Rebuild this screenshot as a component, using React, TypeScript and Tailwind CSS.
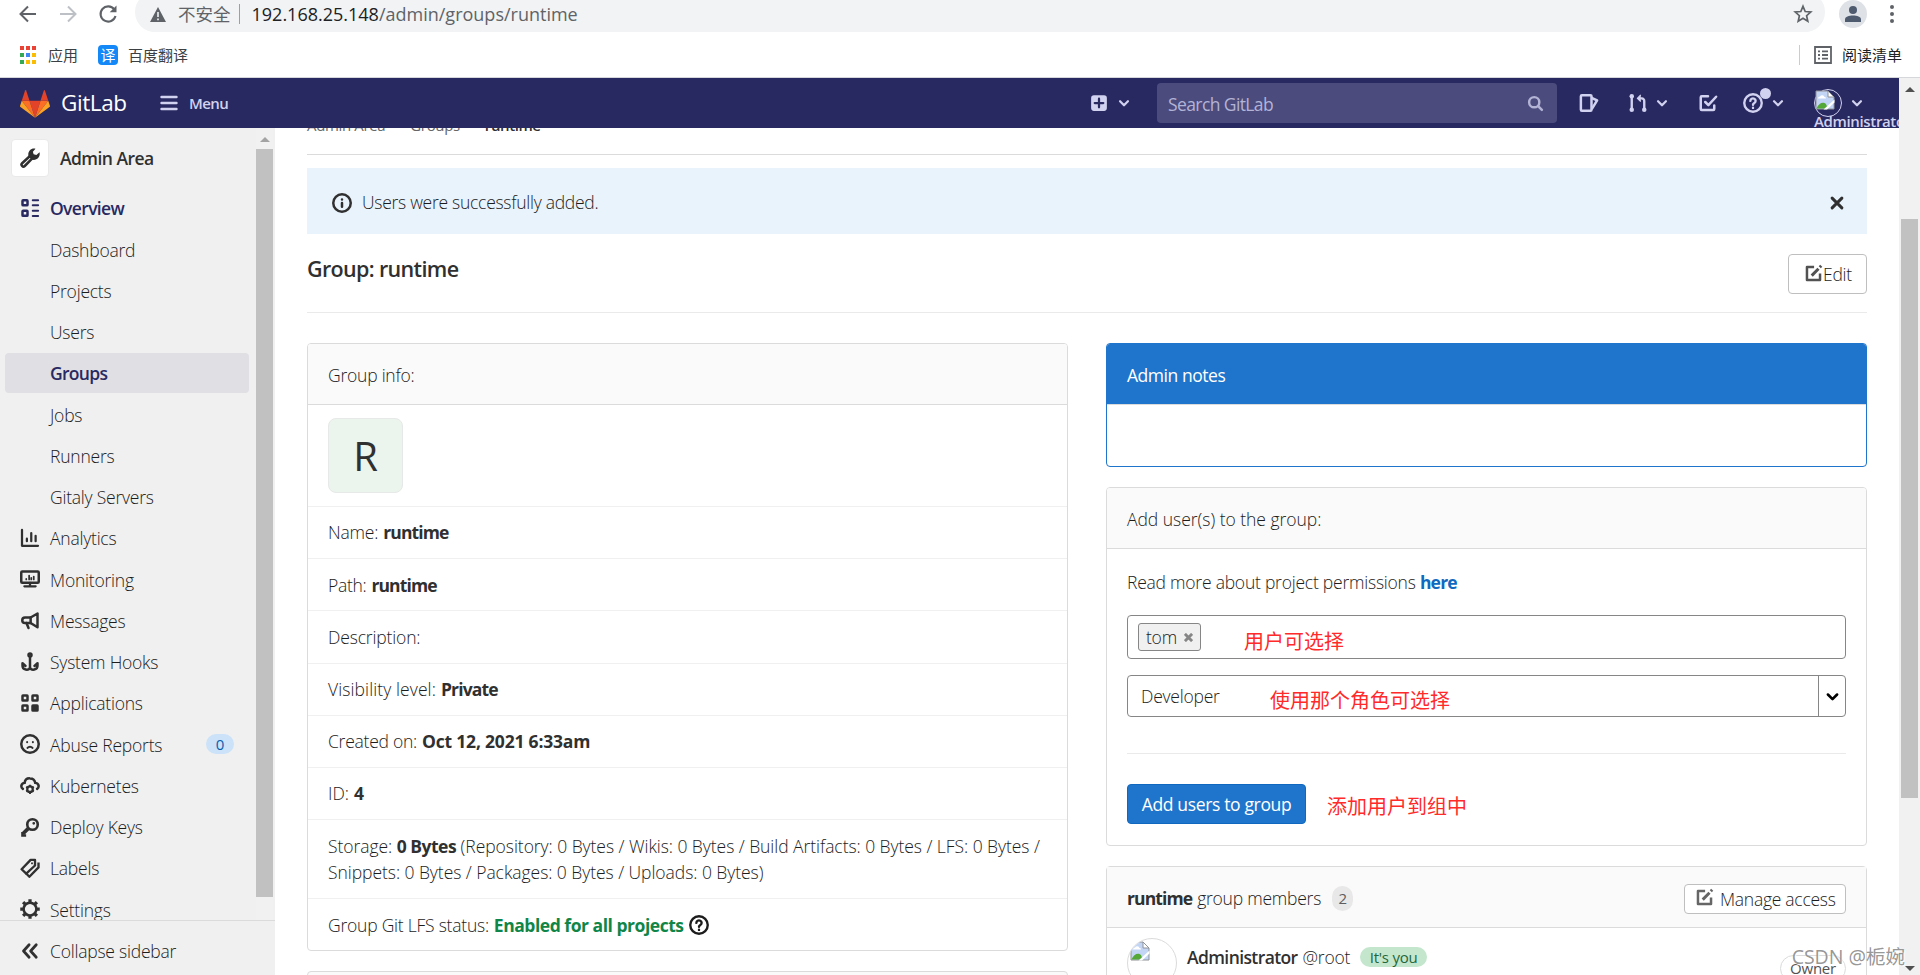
import type { ReactNode } from "react";

const navItems = [
  { label: "Analytics", icon: "chart" },
  { label: "Monitoring", icon: "monitor" },
  { label: "Messages", icon: "messages" },
  { label: "System Hooks", icon: "hook" },
  { label: "Applications", icon: "applications" },
  { label: "Abuse Reports", icon: "abuse", badge: 0 },
  { label: "Kubernetes", icon: "kubernetes" },
  { label: "Deploy Keys", icon: "key" },
  { label: "Labels", icon: "labels" },
  { label: "Settings", icon: "settings" },
];

const overviewItems = ["Dashboard", "Projects", "Users", "Groups", "Jobs", "Runners", "Gitaly Servers"];

const groupInfo = [
  { label: "Name:", value: "runtime", tracking: "tracking-[-0.2px]" },
  { label: "Path:", value: "runtime", tracking: "tracking-[-0.3px]" },
  { label: "Description:", value: "", tracking: "tracking-[-0.15px]" },
  { label: "Visibility level:", value: "Private", tracking: "tracking-[0.1px]" },
  { label: "Created on:", value: "Oct 12, 2021 6:33am", tracking: "tracking-[-0.25px]" },
  { label: "ID:", value: "4", tracking: "tracking-[0px]" },
];

const iconPaths: Record<string, ReactNode> = {
  overview: (
    <g fill="none" stroke="currentColor" strokeWidth="2">
      <rect x="2" y="1.8" width="4" height="4" rx="0.5" />
      <rect x="2" y="10.2" width="4" height="4" rx="0.5" />
      <path strokeWidth="1.6" strokeLinecap="round" d="M10.2 1.7h4.3M10.2 5.8h4.3M10.2 10.2h4.3M10.2 14.3h4.3" />
    </g>
  ),
  chart: (
    <g fill="none" stroke="currentColor" strokeLinecap="round" strokeWidth="1.8">
      <path strokeLinejoin="round" d="M1.6 1.5v12.7h12.8" />
      <path d="M5.5 8.5v2M9 4v6.5M12.5 6.2v4.3" />
    </g>
  ),
  monitor: (
    <g fill="none" stroke="currentColor" strokeLinecap="round">
      <rect x="1" y="2" width="14" height="9" rx="0.8" strokeWidth="2" />
      <path strokeWidth="1.4" d="M5 7.9v.4M7.3 5.2v3.1M9 7v1.3M11 6v2.3" />
      <path strokeWidth="1.8" d="M3.5 13.8h9M8 11v2.5" />
    </g>
  ),
  messages: (
    <g fill="none" stroke="currentColor" strokeWidth="2" strokeLinejoin="round" strokeLinecap="round">
      <path d="M14 2v11L8.5 9.6H4A2.2 2.2 0 0 1 4 5.2h4.5z" />
      <path d="M8.5 5.2v4.4M5.2 9.6l1.6 4" />
    </g>
  ),
  hook: (
    <g fill="none" stroke="currentColor" strokeWidth="2" strokeLinecap="round" strokeLinejoin="round">
      <circle cx="8" cy="2.3" r="1.2" />
      <path d="M8 4v8.5c-1 2.5-6.2 2.3-6-1.8V9l2.4 2.2M8 12.5c1 2.5 6.2 2.3 6-1.8V9l-2.4 2.2" />
    </g>
  ),
  applications: (
    <g fill="none" stroke="currentColor" strokeWidth="2">
      <rect x="2" y="2" width="4" height="4" rx="0.3" />
      <rect x="10" y="2" width="4" height="4" rx="0.3" />
      <rect x="2" y="10" width="4" height="4" rx="0.3" />
      <rect x="10" y="10" width="4" height="4" rx="0.3" fill="currentColor" />
    </g>
  ),
  abuse: (
    <g fill="none" stroke="currentColor">
      <circle cx="8" cy="8" r="7" strokeWidth="2" />
      <path strokeWidth="1.6" strokeLinecap="round" d="M5.7 6.4v.2M10.3 6.4v.2M6 11.1c1-1.3 3-1.3 4 0" />
    </g>
  ),
  kubernetes: (
    <g fill="none" stroke="currentColor">
      <path strokeWidth="2" strokeLinecap="round" d="M2.3 10.3C.3 9 .8 5.8 3.7 5.5 4 2.6 6 1.8 8 1.9c2.5 0 3.9 1.5 4.2 3.6 3 .2 3.5 3.5 1.5 4.8" />
      <circle cx="8" cy="10.5" r="2.2" strokeWidth="1.8" />
      <path strokeWidth="1.5" d="M8 7v1.2M8 12.8V14.3M4.9 8.7l1.1.6M10 11.7l1.1.6M11.1 8.7l-1.1.6M6 11.7l-1.1.6" />
    </g>
  ),
  key: (
    <g fill="none" stroke="currentColor">
      <circle cx="10" cy="6" r="4.2" strokeWidth="2.1" />
      <path strokeWidth="3" strokeLinejoin="round" d="M6.5 9.3L2.3 13.4" />
      <path strokeWidth="1.9" d="M1.9 12v2.8h3" />
      <circle cx="11" cy="5" r="0.6" strokeWidth="1" />
    </g>
  ),
  labels: (
    <g fill="none" stroke="currentColor" strokeLinejoin="round">
      <path strokeWidth="1.9" d="M8.5 1.5H12V6L5 12.5 1.3 9z" />
      <path strokeWidth="1.9" d="M14.8 3.5v4L7.5 15 4.5 12" />
      <path strokeWidth="1.5" strokeLinecap="round" d="M9.6 4.2v.1" />
    </g>
  ),
  settings: (
    <g fill="none" stroke="currentColor">
      <circle cx="8" cy="8" r="5.1" strokeWidth="2" />
      <path
        strokeWidth="2.6"
        d="M8 .2v2.3M8 13.5v2.3M.2 8h2.3M13.5 8h2.3M2.5 2.5l1.6 1.6M11.9 11.9l1.6 1.6M13.5 2.5l-1.6 1.6M4.1 11.9l-1.6 1.6"
      />
    </g>
  ),
  collapse: (
    <path fill="none" stroke="currentColor" strokeWidth="2.2" strokeLinecap="round" strokeLinejoin="round" d="M7.3 3L2.8 8l4.5 5M13 3L8.5 8l4.5 5" />
  ),
  wrench: (
    <g>
      <path fill="none" stroke="currentColor" strokeWidth="2" strokeLinejoin="round" d="M8.2 6.2l-6.5 6a1.5 1.5 0 0 0 2.1 2.2l6.2-6.3" />
      <path fill="currentColor" d="M12.4.6 10.3 2.9l.6 2.1 2.2.5L15.6 3.3c.8 2.8-1 6.2-4.6 6.2l-1.8-.4L6.8 6.7C5.9 3 8.7-.3 12.4.6z" />
    </g>
  ),
  chevron: (
    <path fill="none" stroke="currentColor" strokeWidth="2" strokeLinecap="round" strokeLinejoin="round" d="M4.5 6.5L8 10l3.5-3.5" />
  ),
  plus: (
    <path fillRule="evenodd" fill="currentColor" d="M3.5 1h9A2.5 2.5 0 0 1 15 3.5v9a2.5 2.5 0 0 1-2.5 2.5h-9A2.5 2.5 0 0 1 1 12.5v-9A2.5 2.5 0 0 1 3.5 1zM7 4.2V7H4.2a1 1 0 0 0 0 2H7v2.8a1 1 0 0 0 2 0V9h2.8a1 1 0 0 0 0-2H9V4.2a1 1 0 0 0-2 0z" />
  ),
  search: (
    <g fill="none" stroke="currentColor" strokeWidth="2.3" strokeLinecap="round">
      <circle cx="6.8" cy="6.8" r="4.8" />
      <path d="M10.5 10.5L14 14" />
    </g>
  ),
  issues: (
    <g fill="none" stroke="currentColor" strokeWidth="2" strokeLinejoin="round">
      <rect x="1.5" y="1.8" width="8.5" height="12.4" rx="0.8" />
      <path d="M10.2 4l4.3 1.9-4.3 7" />
    </g>
  ),
  merge: (
    <g fill="none" stroke="currentColor" strokeWidth="1.9">
      <path d="M3 3v10M9 4.3h2A2 2 0 0 1 13 6.5V13" />
      <path d="M10.2 1.5L7.5 4.3l2.7 2.5" fill="currentColor" strokeWidth="1" strokeLinejoin="round" />
      <g fill="currentColor" stroke="none">
        <circle cx="3" cy="2.6" r="1.8" />
        <circle cx="3" cy="13.4" r="1.8" />
        <circle cx="13" cy="13.4" r="1.8" />
      </g>
    </g>
  ),
  todo: (
    <g fill="none" stroke="currentColor" strokeWidth="2" strokeLinecap="round" strokeLinejoin="round">
      <path d="M8 2.5H3a.8.8 0 0 0-.8.8v9.4c0 .4.4.8.8.8h9.2c.4 0 .8-.4.8-.8V10" />
      <path d="M5.8 7.2l2.5 2.5L14.5 3" />
    </g>
  ),
  question: (
    <g fill="none" stroke="currentColor" strokeWidth="1.9" strokeLinecap="round">
      <circle cx="8" cy="8" r="7" />
      <path d="M5.9 6.3a2.1 2 0 1 1 3.2 1.7C8.4 8.4 8 8.7 8 9.4M8 11.8v.1" />
    </g>
  ),
  info: (
    <g fill="none" stroke="currentColor" strokeWidth="2" strokeLinecap="round">
      <circle cx="8" cy="8" r="7" />
      <path d="M8 8v3M8 5.1v.1" />
    </g>
  ),
  close: (
    <path fill="none" stroke="currentColor" strokeWidth="2.4" strokeLinecap="round" d="M4.1 4.1l7.8 7.8M11.9 4.1l-7.8 7.8" />
  ),
  edit: (
    <g fill="none" stroke="currentColor" strokeWidth="2.1" strokeLinejoin="round">
      <path d="M8.5 2.5H2.5v11h11V8" />
      <path strokeWidth="2.5" d="M6.5 9.8L12.2 4M13.3 2.7l1.2-1.2" />
    </g>
  ),
};

function Icon({ name, size = 20, className = "" }: { name: string; size?: number; className?: string }) {
  return (
    <svg viewBox="0 0 16 16" width={size} height={size} className={`shrink-0 ${className}`}>
      {iconPaths[name]}
    </svg>
  );
}

function BrokenImage() {
  return (
    <svg viewBox="0 0 20 20" width="20" height="20" className="shrink-0">
      <path d="M1 1h12l6 6v12H1z" fill="#c3d5f5" stroke="#8f9296" />
      <path d="M13 1v6h6z" fill="#fff" stroke="#8f9296" />
      <path d="M3 8.5a2 2 0 0 1 2-2 2.5 2.5 0 0 1 4.5.5c1 0 1.5.7 1.5 1.5z" fill="#fff" />
      <path d="M1.5 18.5c2-4.5 5-6.5 8-5.5 2 .7 2 3 3.5 5.5z" fill="#54a838" />
      <path d="M8.5 19.5L19.5 9.5v3L12 19.5z" fill="#fff" />
    </svg>
  );
}

function BrowserChrome() {
  return (
    <div className="h-[78px] shrink-0 overflow-hidden border-b border-[#d5d7da] bg-white">
      <div className="flex h-8 items-center">
        <div className="-mt-1 flex w-[135px] shrink-0 items-center gap-5 pl-[18px] text-[#5f6368]">
          <svg viewBox="0 0 20 20" width="20" height="20" fill="none" stroke="currentColor" strokeWidth="2">
            <path d="M18 10H3M10 2.5L2.5 10l7.5 7.5" />
          </svg>
          <svg viewBox="0 0 20 20" width="20" height="20" fill="none" stroke="#bdc1c6" strokeWidth="2">
            <path d="M2 10h15M10 2.5l7.5 7.5-7.5 7.5" />
          </svg>
          <svg viewBox="0 0 20 20" width="20" height="20" fill="none" stroke="currentColor" strokeWidth="2.1">
            <path d="M16.3 5.5A7.6 7.6 0 1 0 17.5 12" />
            <path d="M18.5 1.5v6.8h-6.8z" fill="currentColor" stroke="none" />
          </svg>
        </div>
        <div className="-mt-2 flex h-10 w-[1690px] shrink-0 items-center rounded-full bg-[#f1f3f4] pl-[15px] pr-3 text-[18px] text-[#5f6368]">
          <svg viewBox="0 0 16 15" width="16" height="15" className="mt-1">
            <path d="M8 0l8 15H0z" fill="#5f6368" />
            <path d="M8 5v5M8 11.5v1.7" stroke="#f1f3f4" strokeWidth="1.6" />
          </svg>
          <span className="ml-3 mt-1 text-[17.5px]">不安全</span>
          <span className="ml-2 mt-1 h-5 w-px bg-[#9aa0a6]" />
          <span className="ml-3 mt-1">
            <span className="text-[#202124]">192.168.25.148</span>/admin/groups/runtime
          </span>
          <svg viewBox="0 0 20 20" width="20" height="20" className="ml-auto mt-1" fill="none" stroke="currentColor" strokeWidth="1.7">
            <path d="M10 2.3l2.2 5.2 5.6.5-4.2 3.7 1.2 5.5-4.8-2.9-4.8 2.9 1.2-5.5L2.2 8l5.6-.5z" />
          </svg>
        </div>
        <div className="-mt-1 ml-[14px] flex size-7 shrink-0 items-center justify-center rounded-full bg-[#dee1e6]">
          <svg viewBox="0 0 18 18" width="18" height="18" fill="#4e5a6e">
            <circle cx="9" cy="5" r="4" />
            <path d="M1 17v-2.5c0-3 4-4 8-4s8 1 8 4V17z" />
          </svg>
        </div>
        <div className="-mt-1 ml-[23px] flex flex-col gap-[3px]">
          <span className="size-1 rounded-full bg-[#5f6368]" />
          <span className="size-1 rounded-full bg-[#5f6368]" />
          <span className="size-1 rounded-full bg-[#5f6368]" />
        </div>
      </div>
      <div className="flex h-[46px] items-center pl-5 pr-[18px] text-[15px] text-[#3c4043]">
        <div className="grid grid-cols-3 gap-x-[2px] gap-y-[3px]">
          <span className="size-1 bg-[#ea4335]" />
          <span className="size-1 bg-[#ea4335]" />
          <span className="size-1 bg-[#ea4335]" />
          <span className="size-1 bg-[#34a853]" />
          <span className="size-1 bg-[#4285f4]" />
          <span className="size-1 bg-[#fbbc04]" />
          <span className="size-1 bg-[#34a853]" />
          <span className="size-1 bg-[#fbbc04]" />
          <span className="size-1 bg-[#fbbc04]" />
        </div>
        <span className="ml-3">应用</span>
        <span className="ml-5 flex size-5 items-center justify-center rounded bg-[#1588f8] text-[15px] text-white">译</span>
        <span className="ml-[10px]">百度翻译</span>
        <span className="ml-auto h-5 w-px bg-[#c9ccd0]" />
        <svg viewBox="0 0 18 18" width="18" height="18" className="ml-[14px]" fill="none" stroke="#5f6368" strokeWidth="1.8">
          <path d="M1 1h16v16H1zM4 5.3h2M8 5.3h6M4 9h2M8 9h6M4 12.7h2M8 12.7h6" />
        </svg>
        <span className="ml-[10px] text-[#202124]">阅读清单</span>
      </div>
    </div>
  );
}

function Navbar() {
  return (
    <header className="relative z-10 flex h-[50px] shrink-0 items-center overflow-hidden bg-[#292961] pl-5 text-[#d1d1f0]">
      <svg viewBox="0 0 36 34" width="30" height="29" className="shrink-0">
        <path d="M18 34l6.6-20.4H11.4z" fill="#e24329" />
        <path d="M18 34l-6.6-20.4H2.1z" fill="#fc6d26" />
        <path d="M2.1 13.6L.1 19.8a1.4 1.4 0 0 0 .5 1.5L18 34z" fill="#fca326" />
        <path d="M2.1 13.6h9.3L7.4 1.3a.7.7 0 0 0-1.3 0z" fill="#e24329" />
        <path d="M18 34l6.6-20.4h9.3z" fill="#fc6d26" />
        <path d="M33.9 13.6l2 6.2a1.4 1.4 0 0 1-.5 1.5L18 34z" fill="#fca326" />
        <path d="M33.9 13.6h-9.3l4-12.3a.7.7 0 0 1 1.3 0z" fill="#e24329" />
      </svg>
      <span className="ml-[11px] w-[99px] text-[22.5px] tracking-[-0.4px] text-white">GitLab</span>
      <svg viewBox="0 0 18 16" width="18" height="16" className="shrink-0" stroke="currentColor" strokeWidth="2.4" strokeLinecap="round">
        <path d="M1.5 2h15M1.5 8h15M1.5 14h15" />
      </svg>
      <span className="ml-[11px] mt-px text-[15px] font-semibold tracking-[-0.6px]">Menu</span>
      <div className="ml-auto flex items-center">
        <Icon name="plus" size={18} />
        <Icon name="chevron" size={18} className="ml-[7px]" />
        <div className="ml-[24px] flex h-10 w-[400px] items-center rounded bg-[#4c4b7d] pl-[11px] pr-[13px] text-[#b3b3d6]">
          <span className="mt-[2px] text-[17.5px] tracking-[-0.6px]">Search GitLab</span>
          <Icon name="search" size={17} className="ml-auto" />
        </div>
        <Icon name="issues" className="ml-[22px]" />
        <Icon name="merge" className="ml-[29px]" />
        <Icon name="chevron" size={18} className="ml-[5px]" />
        <Icon name="todo" className="ml-[27px]" />
        <span className="relative ml-[25px]">
          <Icon name="question" />
          <span className="absolute -top-[5px] left-[17px] size-[11px] rounded-full bg-[#d1d1f0]" />
        </span>
        <Icon name="chevron" size={18} className="ml-[6px]" />
        <div className="relative ml-[27px] size-7 shrink-0 rounded-full border border-[#d1d1f0]">
          <BrokenImage />
          <span className="absolute -left-[1px] top-[20px] text-[15px] font-semibold tracking-[-0.35px]">Administrator</span>
        </div>
        <Icon name="chevron" size={18} className="ml-[6px] mr-[33px]" />
      </div>
    </header>
  );
}

function Sidebar() {
  return (
    <aside className="flex w-[275px] shrink-0 flex-col bg-[#f0f0f0] text-[17.5px] font-light tracking-[-0.22px] text-[#1c1c1c]">
      <div className="flex h-[793px] border-b border-[#dbdbdb]">
        <nav className="w-[256px] overflow-hidden pt-[11px]">
          <div className="flex h-[38px] items-center pl-[11px]">
            <span className="flex size-[38px] items-center justify-center rounded border border-[#e9e9e9] bg-white text-[#303030]">
              <Icon name="wrench" />
            </span>
            <span className="ml-[11px] pt-px font-semibold tracking-[-0.55px] text-[#303030]">Admin Area</span>
          </div>
          <div className="mt-[11px] flex h-10 items-center pl-5 font-semibold text-[#292961]">
            <Icon name="overview" />
            <span className="ml-[10px] pt-px tracking-[-0.65px]">Overview</span>
          </div>
          {overviewItems.map((item) => (
            <div
              key={item}
              className={`ml-[5px] mt-[1.25px] flex h-10 w-[244px] items-center rounded pl-[45px] pt-px ${
                item === "Groups" ? "bg-[#dfdfe4] font-semibold tracking-[-0.7px] text-[#292961]" : ""
              }`}
            >
              {item}
            </div>
          ))}
          {navItems.map((item) => (
            <div key={item.label} className="mt-[1.25px] flex h-10 items-center pl-5 pr-[22px]">
              <Icon name={item.icon} className="text-[#303030]" />
              <span className="ml-[10px] pt-px">{item.label}</span>
              {item.badge !== undefined && (
                <span className="ml-auto flex h-5 w-7 items-center justify-center rounded-full bg-[#cbe2f9] text-[15px] font-normal text-[#0b5cad]">
                  {item.badge}
                </span>
              )}
            </div>
          ))}
        </nav>
        <div className="flex w-[17px] flex-col items-center bg-[#f1f1f1]">
          <svg viewBox="0 0 10 5" width="10" height="5" className="mb-[7px] mt-[9px] shrink-0">
            <path d="M0 5l5-5 5 5z" fill="#a3a3a3" />
          </svg>
          <div className="h-[748px] w-full bg-[#c1c1c1]" />
        </div>
      </div>
      <div className="flex flex-1 items-center pl-5 pt-[6px]">
        <Icon name="collapse" className="text-[#303030]" />
        <span className="ml-[10px]">Collapse sidebar</span>
      </div>
    </aside>
  );
}

function CardHeader({ children }: { children: ReactNode }) {
  return (
    <div className="flex h-[61px] items-center border-b border-[#dbdbdb] bg-[#fafafa] px-5 pt-[3px]">{children}</div>
  );
}

function GroupInfoCard() {
  return (
    <section className="h-[608px] overflow-hidden rounded border border-[#dbdbdb]">
      <CardHeader>Group info:</CardHeader>
      <div className="h-[102px] border-b border-[#f0f0f0] px-5 pt-[13px]">
        <div className="flex size-[75px] items-center justify-center rounded-lg border border-[#e6e9e7] bg-[#ecf4ee] pt-px text-[40px] font-normal text-[#303030]">
          R
        </div>
      </div>
      {groupInfo.map((row) => (
        <div key={row.label} className="flex h-[52.2px] items-center gap-[5px] border-b border-[#f0f0f0] px-5">
          <span className={row.tracking}>{row.label}</span>
          <strong
            className={`font-bold text-[#303030] ${/\d/.test(row.value) ? "tracking-[-0.2px]" : "tracking-[-0.85px]"}`}
          >
            {row.value}
          </strong>
        </div>
      ))}
      <div className="h-[78.5px] whitespace-nowrap border-b border-[#f0f0f0] px-5 pt-[13px] leading-[26.25px] tracking-[-0.05px]">
        Storage: <strong className="font-bold tracking-[-0.5px] text-[#303030]">0 Bytes</strong> (Repository: 0 Bytes / Wikis: 0 Bytes / Build Artifacts: 0 Bytes / LFS: 0 Bytes /
        <br />
        Snippets: 0 Bytes / Packages: 0 Bytes / Uploads: 0 Bytes)
      </div>
      <div className="flex h-[52px] items-center gap-[5px] px-5">
        Group Git LFS status:{" "}
        <strong className="font-bold tracking-[-0.47px] text-[#108548]">Enabled for all projects</strong>
        <Icon name="question" />
      </div>
    </section>
  );
}

function AddUsersCard() {
  return (
    <section className="mt-5 h-[359px] overflow-hidden rounded border border-[#dbdbdb]">
      <CardHeader>
        <span className="tracking-[-0.03px]">Add user(s) to the group:</span>
      </CardHeader>
      <div className="px-5 pt-5">
        <p className="mb-5 leading-[26px]">
          Read more about project permissions <a className="font-bold tracking-[-0.8px] text-[#1068bf]">here</a>
        </p>
        <div className="flex h-11 items-center rounded border border-[#868686] pl-[10px]">
          <span className="flex h-7 w-[63px] items-center rounded-[3px] border border-[#868686] bg-[#f0f0f0] pl-[7px]">
            tom
            <svg viewBox="0 0 10 10" width="9" height="9" className="ml-[7px]" stroke="#868686" strokeWidth="3.2">
              <path d="M1 1l8 8M9 1l-8 8" />
            </svg>
          </span>
          <span className="ml-[43px] mt-[10px] text-[20px] font-normal tracking-normal text-[#ff2a2a]">用户可选择</span>
        </div>
        <div className="mt-4 flex h-[42px] items-center rounded border border-[#868686] pl-[13px]">
          <span className="w-[129px]">Developer</span>
          <span className="mt-[10px] text-[20px] font-normal tracking-normal text-[#ff2a2a]">使用那个角色可选择</span>
          <span className="ml-auto flex h-full w-[27px] items-center justify-center border-l border-[#868686] text-black">
            <Icon name="chevron" size={21} />
          </span>
        </div>
        <hr className="mt-9 border-[#eaeaea]" />
        <div className="mt-[30px] flex items-center">
          <button className="h-10 w-[179px] rounded border border-[#1068bf] bg-[#1f75cb] pt-px font-normal tracking-[-0.35px] text-white">
            Add users to group
          </button>
          <span className="ml-[21px] mt-[5px] text-[20px] font-normal tracking-normal text-[#ff2a2a]">添加用户到组中</span>
        </div>
      </div>
    </section>
  );
}

function MembersCard() {
  return (
    <section className="mt-5 rounded-t border border-[#dbdbdb]">
      <CardHeader>
        <strong className="mr-[5px] font-bold tracking-[-0.9px] text-[#303030]">runtime</strong> group members
        <span className="ml-[11px] flex h-[25px] w-[21px] items-center justify-center rounded-full bg-[#e8e8e8] text-[15px] font-normal text-[#5e5e5e]">2</span>
        <button className="ml-auto flex h-[30px] w-[162px] items-center rounded border border-[#bfbfbf] bg-white pl-[10px]">
          <Icon name="edit" size={19} className="-mt-[2px] text-[#666]" />
          <span className="ml-[6px] pt-px tracking-[-0.27px]">Manage access</span>
        </button>
      </CardHeader>
      <div className="flex px-5 pt-[10px]">
        <div className="size-[50px] shrink-0 overflow-hidden rounded-full border border-[#dbdbdb] pl-[2px] pt-[2px]">
          <BrokenImage />
        </div>
        <div className="ml-[10px] flex h-[38px] items-center">
          <strong className="mr-[5px] font-semibold tracking-[-0.6px] text-[#303030]">Administrator</strong>
          <span>@root</span>
          <span className="ml-[10px] flex h-5 w-[67px] items-center justify-center rounded-full bg-[#c3e6cd] text-[15px] font-normal text-[#24663b]">
            It's you
          </span>
        </div>
        <span className="ml-auto mt-[17px] flex h-[27px] w-[66px] items-center justify-center rounded-full border border-[#dbdbdb] text-[15px] font-normal text-[#525252]">
          Owner
        </span>
      </div>
    </section>
  );
}

function Content() {
  return (
    <main className="min-w-0 flex-1 overflow-hidden px-8 text-[17.5px] font-light tracking-[-0.23px] text-[#1c1c1c]">
      <div className="flex h-[27px] items-start border-b border-[#dbdbdb] text-[15px]">
        <div className="-mt-[14px] flex gap-[25px] font-normal tracking-[-0.35px] text-[#666]">
          <span>Admin Area</span>
          <span>Groups</span>
          <strong className="font-semibold tracking-[-0.4px] text-[#303030]">runtime</strong>
        </div>
      </div>
      <div className="mt-[13px] flex h-[66px] items-center bg-[#e9f3fc] pl-[25px] pr-5 pt-[2px]">
        <Icon name="info" className="mt-px text-[#303030]" />
        <span className="ml-[10px] tracking-[-0.27px]">Users were successfully added.</span>
        <Icon name="close" className="ml-auto mt-px text-[#303030]" />
      </div>
      <div className="flex h-[79px] justify-between border-b border-[#eaeaea] pt-5">
        <h3 className="-mt-px text-[21.5px] font-semibold tracking-[-0.65px] text-[#303030]">Group: runtime</h3>
        <button className="flex h-10 w-[79px] items-center rounded border border-[#bfbfbf] pl-[15px] pt-px">
          <Icon name="edit" size={19} className="-mt-[3px] text-[#525252]" />
          Edit
        </button>
      </div>
      <div className="mt-[30px] grid grid-cols-2 gap-[38px]">
        <div>
          <GroupInfoCard />
          <div className="mt-5 h-10 rounded border border-[#dbdbdb] bg-[#fafafa]" />
        </div>
        <div>
          <section className="h-[124px] overflow-hidden rounded border border-[#1f75cb]">
            <div className="flex h-[61px] items-center border-b border-[#dbdbdb] bg-[#1f75cb] px-5 pt-[3px] font-normal tracking-[-0.45px] text-white">
              Admin notes
            </div>
          </section>
          <AddUsersCard />
          <MembersCard />
        </div>
      </div>
    </main>
  );
}

export default function App() {
  return (
    <div className="relative flex h-[975px] w-[1920px] flex-col overflow-hidden bg-white font-['Open_Sans','Noto_Sans_CJK_SC',sans-serif]">
      <BrowserChrome />
      <div className="flex min-h-0 flex-1">
        <div className="flex w-[1899px] flex-col">
          <Navbar />
          <div className="flex min-h-0 flex-1">
            <Sidebar />
            <Content />
          </div>
        </div>
        <div className="flex w-[21px] flex-col items-center bg-[#f1f1f1]">
          <svg viewBox="0 0 10 5" width="10" height="5" className="mt-[9px] shrink-0">
            <path d="M0 5l5-5 5 5z" fill="#505050" />
          </svg>
          <div className="mt-[127px] h-[579px] w-[17px] bg-[#c1c1c1]" />
          <svg viewBox="0 0 10 5" width="10" height="5" className="mb-[4px] mt-auto shrink-0">
            <path d="M0 0l5 5 5-5z" fill="#505050" />
          </svg>
        </div>
      </div>
      <span className="absolute bottom-[3px] right-[15px] z-20 text-[19.5px] leading-[30px] text-[#8a8a8a]/90 [text-shadow:1px_1px_1px_#fff]">
        CSDN @栀婉
      </span>
    </div>
  );
}
